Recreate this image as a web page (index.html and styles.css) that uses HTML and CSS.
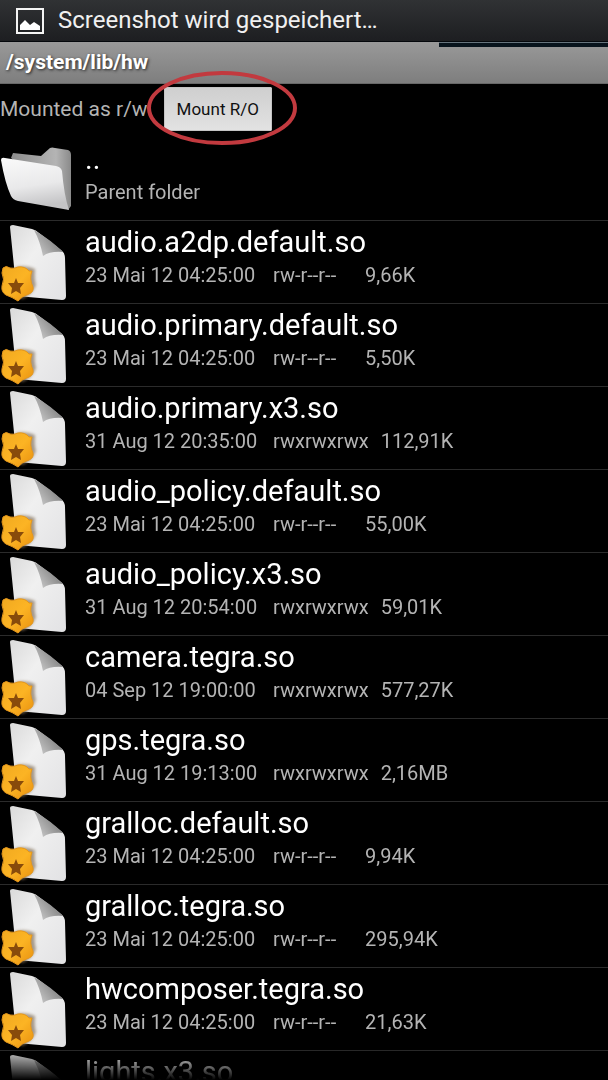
FILE: index.html
```html
<!DOCTYPE html>
<html lang="de">
<head>
<meta charset="utf-8">
<meta name="viewport" content="width=device-width, initial-scale=1">
<title>/system/lib/hw</title>
<link rel="stylesheet" href="styles.css">
</head>
<body>
<svg class="defs" width="0" height="0" aria-hidden="true">
  <defs>
    <linearGradient id="paper" x1="0" y1="0" x2="1" y2="1">
      <stop offset="0" stop-color="#dadada"/><stop offset=".4" stop-color="#f0f0f0"/><stop offset="1" stop-color="#e2e2e4"/>
    </linearGradient>
    <linearGradient id="fold" x1="0" y1=".7" x2=".6" y2=".3">
      <stop offset="0" stop-color="#c8c8c8"/><stop offset="1" stop-color="#8c8c8c"/>
    </linearGradient>
    <linearGradient id="gold" x1="0" y1="0" x2="1" y2="1">
      <stop offset="0" stop-color="#f0a920"/><stop offset=".5" stop-color="#fcb424"/><stop offset="1" stop-color="#e8900e"/>
    </linearGradient>
    <linearGradient id="front" x1="0" y1="0" x2=".2" y2="1">
      <stop offset="0" stop-color="#fafafa"/><stop offset=".6" stop-color="#e9e9ea"/><stop offset="1" stop-color="#c4c4c6"/>
    </linearGradient>
    <linearGradient id="back" x1="0" y1="0" x2="1" y2="0">
      <stop offset="0" stop-color="#8c8c8c"/><stop offset=".75" stop-color="#b4b4b4"/><stop offset="1" stop-color="#8a8a8a"/>
    </linearGradient>
    <filter id="soft" x="-20%" y="-20%" width="140%" height="140%"><feGaussianBlur stdDeviation="1.5"/></filter>
    <symbol id="file" viewBox="0 0 80 82">
      <path d="M10 6 Q10 4 13 4 L32 8 Q36 9 39 12 L61 29 Q65 32 65 37 L66 75 Q66 79 62 79 L17 75 Z" fill="url(#paper)"/>
      <path d="M34 9 Q40 20 43 35 Q50 30 63 31 Q51 19 34 9Z" fill="url(#fold)"/>
      <path d="M14 47 Q24 43 35 48 Q34 58 36 64 Q32 74 22 78 L17 74Z" fill="#8c7b66" opacity=".75" filter="url(#soft)"/>
      <path d="M3 47 Q6 44 10 47 Q14 48 18 46 Q25 45 29 50 L32 50 Q29 58 33 66 Q34 71 29 73 Q22 75 18 80 Q12 76 6 74 Q1 71 2 65 Q5 58 2 52 Z" fill="url(#gold)" stroke="#e5971c" stroke-width="1"/>
      <path d="M16 57 L18 62 L24 62 L20 67 L21 73 L16 70 L11 73 L12 67 L8 62 L14 62Z" fill="#884b0b"/>
    </symbol>
    <symbol id="folder" viewBox="0 0 80 82">
      <path d="M11 20 L13 15 L41 18 L50 10 Q52 9 55 10 L68 12 Q71 13 71 17 L71 68 L68 72 L60 60Z" fill="url(#back)"/>
      <path d="M1 22 Q1 19 5 20 L56 28 Q61 29 62 33 Q64 57 69 72 L18 63 Q13 62 11 58 Q5 45 1 22Z" fill="url(#front)"/>
    </symbol>
  </defs>
</svg>

<div class="status">
  <svg class="status-icon" viewBox="0 0 28 26" aria-hidden="true">
    <rect x="1" y="1" width="26" height="24" fill="none" stroke="#f4f4f4" stroke-width="2"/>
    <path d="M4 22V17L9 12L14 17L18 14L24 18V22Z" fill="#fff"/>
  </svg>
  <span>Screenshot wird gespeichert…</span>
</div>

<header class="path-bar"><h1 class="path">/system/lib/hw</h1></header>

<section class="mount">
  <span>Mounted as r/w</span>
  <span class="mount-action">
    <button class="mount-button" type="button">Mount R/O</button>
    <svg class="marker" viewBox="0 0 150 76" aria-hidden="true"><ellipse cx="75" cy="38" rx="73" ry="35" fill="none" stroke="#c23a3f" stroke-width="4"/></svg>
  </span>
</section>

<main class="list">
  <div class="row parent"><svg class="icon"><use href="#folder"/></svg><div class="text"><div class="name">..</div><div class="detail">Parent folder</div></div></div>
  <div class="row"><svg class="icon"><use href="#file"/></svg><div class="text"><div class="name">audio.a2dp.default.so</div><div class="detail"><span class="date">23 Mai 12 04:25:00</span><span class="mode">rw-r--r--</span><span>9,66K</span></div></div></div>
  <div class="row"><svg class="icon"><use href="#file"/></svg><div class="text"><div class="name">audio.primary.default.so</div><div class="detail"><span class="date">23 Mai 12 04:25:00</span><span class="mode">rw-r--r--</span><span>5,50K</span></div></div></div>
  <div class="row"><svg class="icon"><use href="#file"/></svg><div class="text"><div class="name">audio.primary.x3.so</div><div class="detail"><span class="date">31 Aug 12 20:35:00</span><span class="mode">rwxrwxrwx</span><span>112,91K</span></div></div></div>
  <div class="row"><svg class="icon"><use href="#file"/></svg><div class="text"><div class="name">audio_policy.default.so</div><div class="detail"><span class="date">23 Mai 12 04:25:00</span><span class="mode">rw-r--r--</span><span>55,00K</span></div></div></div>
  <div class="row"><svg class="icon"><use href="#file"/></svg><div class="text"><div class="name">audio_policy.x3.so</div><div class="detail"><span class="date">31 Aug 12 20:54:00</span><span class="mode">rwxrwxrwx</span><span>59,01K</span></div></div></div>
  <div class="row"><svg class="icon"><use href="#file"/></svg><div class="text"><div class="name">camera.tegra.so</div><div class="detail"><span class="date">04 Sep 12 19:00:00</span><span class="mode">rwxrwxrwx</span><span>577,27K</span></div></div></div>
  <div class="row"><svg class="icon"><use href="#file"/></svg><div class="text"><div class="name">gps.tegra.so</div><div class="detail"><span class="date">31 Aug 12 19:13:00</span><span class="mode">rwxrwxrwx</span><span>2,16MB</span></div></div></div>
  <div class="row"><svg class="icon"><use href="#file"/></svg><div class="text"><div class="name">gralloc.default.so</div><div class="detail"><span class="date">23 Mai 12 04:25:00</span><span class="mode">rw-r--r--</span><span>9,94K</span></div></div></div>
  <div class="row"><svg class="icon"><use href="#file"/></svg><div class="text"><div class="name">gralloc.tegra.so</div><div class="detail"><span class="date">23 Mai 12 04:25:00</span><span class="mode">rw-r--r--</span><span>295,94K</span></div></div></div>
  <div class="row"><svg class="icon"><use href="#file"/></svg><div class="text"><div class="name">hwcomposer.tegra.so</div><div class="detail"><span class="date">23 Mai 12 04:25:00</span><span class="mode">rw-r--r--</span><span>21,63K</span></div></div></div>
  <div class="row"><svg class="icon"><use href="#file"/></svg><div class="text"><div class="name">lights.x3.so</div></div></div>
</main>
</body>
</html>
```
FILE: styles.css
```css
* { box-sizing: border-box; }

body {
  display: flex;
  flex-direction: column;
  height: 100vh;
  margin: 0;
  overflow: hidden;
  background: #000;
  color: #fff;
  font-family: Roboto, "Liberation Sans", sans-serif;
}

.defs { position: absolute; }

.status {
  display: flex;
  flex: none;
  align-items: center;
  gap: 14px;
  padding: 6px 16px;
  border-bottom: 1px solid #05080c;
  background: linear-gradient(#303234, #1d1e21);
  color: #f0f0f0;
  font-size: 24px;
  line-height: 29px;
}

.status-icon { width: 28px; height: 26px; }

.path-bar {
  position: relative;
  flex: none;
  padding: 6px;
  border-bottom: 1px solid #686868;
  background: linear-gradient(#999, #7e7e7e);
}

/* remaining part of the scroll indicator along the top edge */
.path-bar::before {
  content: "";
  position: absolute;
  top: 0;
  right: 0;
  left: 72.2%;
  height: 4px;
  border-top: 1px solid #66747d;
  background: #07131c;
}

.path {
  margin: 0;
  font-size: 21px;
  font-weight: 700;
  line-height: 29px;
  text-shadow: 1px 1px 3px #222;
}

.mount {
  display: flex;
  flex: none;
  align-items: center;
  gap: 16px;
  padding: 3px 0 7px;
  color: #b4b4b4;
  font-size: 21px;
  line-height: 24px;
}

.mount-action { position: relative; }

.mount-button {
  display: block;
  padding: 10px 12px;
  border: 1px solid #c4c4c4;
  border-radius: 1px;
  background: linear-gradient(#cfcfcf, #e2e2e2);
  color: #111;
  font: 17px/22px Roboto, "Liberation Sans", sans-serif;
}

.marker {
  position: absolute;
  top: -17px;
  left: -17px;
  width: 150px;
  height: 76px;
  pointer-events: none;
}

.list {
  flex: 1;
  min-height: 0;
  overflow: hidden;
  -webkit-mask-image: linear-gradient(to top, transparent, #000 32px);
  mask-image: linear-gradient(to top, transparent, #000 32px);
}

.row {
  display: flex;
  gap: 5px;
  border-bottom: 1px solid #2b2b2b;
}

.icon { flex: none; width: 80px; height: 82px; }

.text { padding-top: 4px; }

.name {
  font-size: 29px;
  line-height: 34px;
}

.detail {
  display: flex;
  gap: 12px;
  color: #b4b4b4;
  font-size: 20px;
  line-height: 32px;
}

.date { min-width: 176px; }

.mode { min-width: 80px; }
```
